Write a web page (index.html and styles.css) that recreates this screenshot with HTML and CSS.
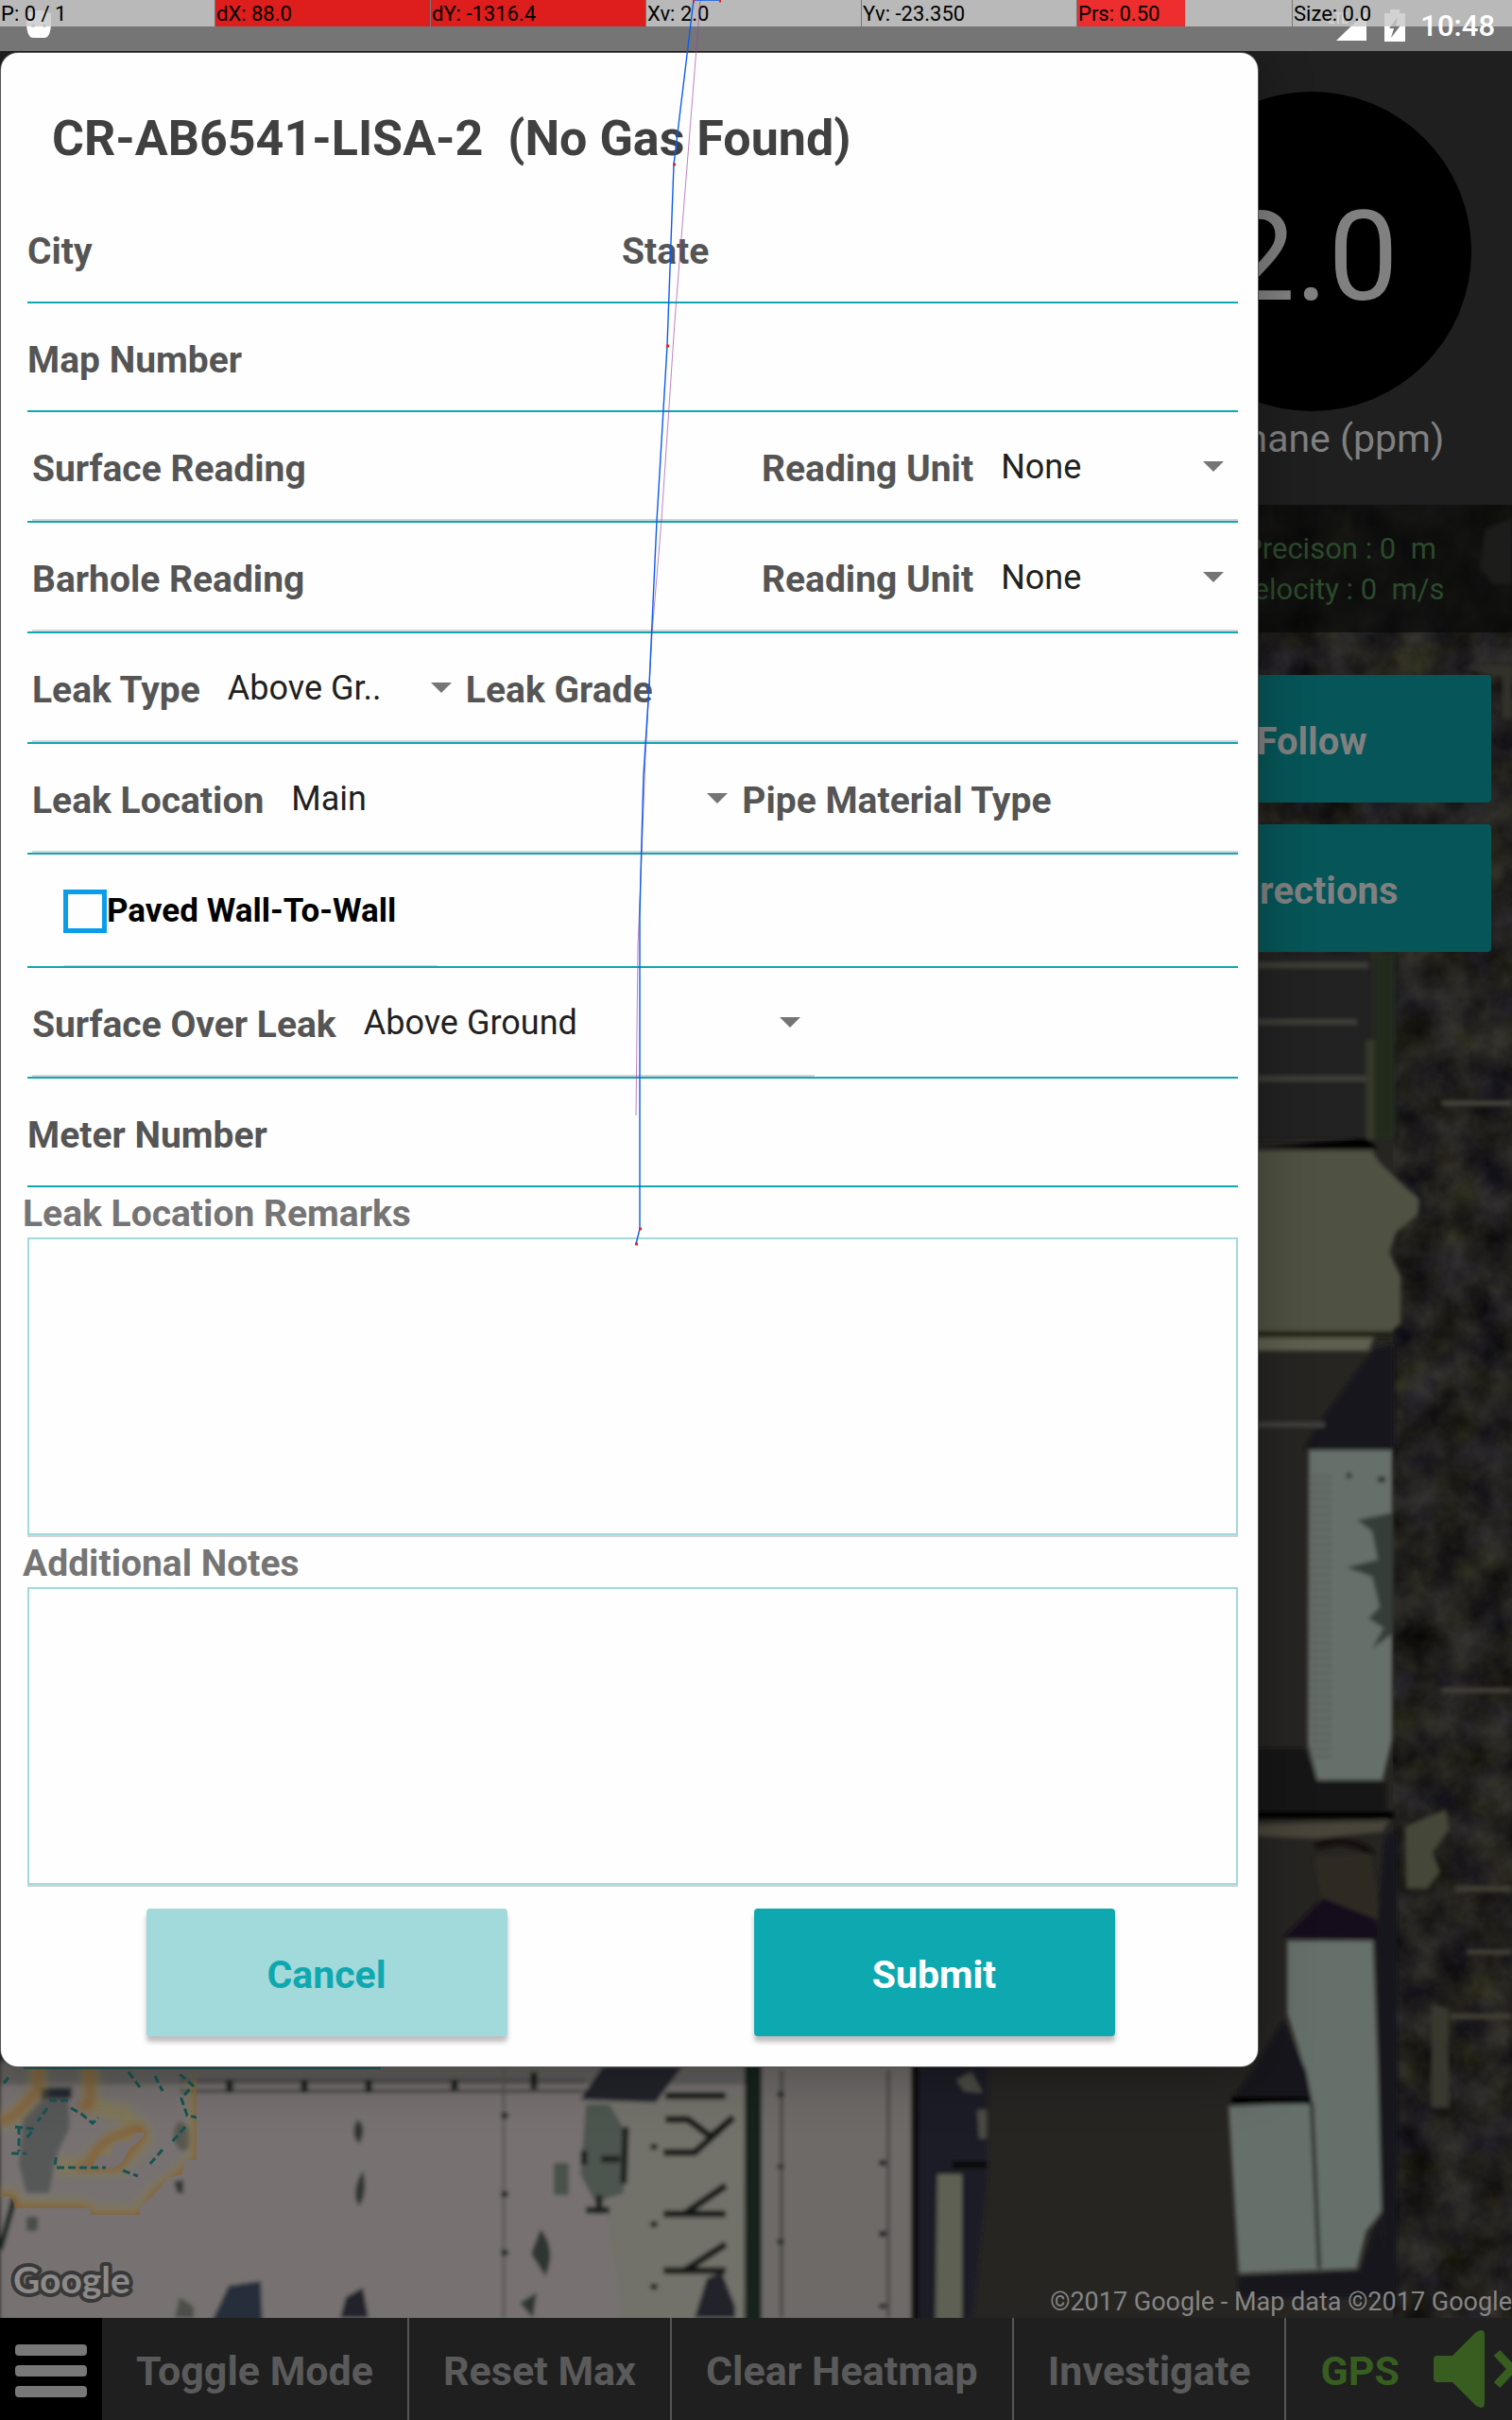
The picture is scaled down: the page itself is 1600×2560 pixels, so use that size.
FILE: index.html
```html
<!DOCTYPE html>
<html lang="en">
<head>
<meta charset="utf-8">
<meta name="viewport" content="width=device-width, initial-scale=1">
<title>Leak report</title>
<link rel="stylesheet" href="styles.css">
</head>
<body>
<header class="status-bar">
  <svg class="robot" viewBox="0 0 26 32" aria-hidden="true"><path d="M0 6Q13 0 26 6V18Q25 32 19 32H7Q1 32 0 18Z" fill="#fff"/><circle cx="7" cy="19" r="2" fill="#bbb"/><circle cx="19" cy="19" r="2" fill="#bbb"/></svg>
  <div class="status-icons">
    <svg class="signal" viewBox="0 0 40 36" aria-hidden="true"><path d="M40 3V34H8Z" fill="#fff"/><path d="M1 4V15H6M7 5H13M10 5V16M20 5H15V15H20M15 10H19" fill="none" stroke="#fff" stroke-width="2"/></svg>
    <svg class="battery" viewBox="0 0 22 34" aria-hidden="true"><path d="M6 0H16V4H22V34H0V4H6Z" fill="#fff"/><path d="M14 8L5 20H10L7 30L17 17H12Z" fill="#757575"/></svg>
    <time>10:48</time>
  </div>
</header>
<div class="pointer-bar">
  <span>P: 0 / 1</span><span class="hot">dX: 88.0</span><span class="hot">dY: -1316.4</span><span>Xv: 2.0</span><span>Yv: -23.350</span><span class="half">Prs: 0.50</span><span>Size: 0.0</span>
</div>

<main class="stage">
  <svg class="map" viewBox="0 54 1600 2398" preserveAspectRatio="xMidYMin slice" aria-hidden="true">
    <defs>
      <filter id="soft" x="-5%" y="-5%" width="110%" height="110%"><feGaussianBlur stdDeviation="2"/></filter>
      <filter id="glow" x="-20%" y="-20%" width="140%" height="140%"><feGaussianBlur stdDeviation="4"/></filter>
      <filter id="leaves" x="0" y="0" width="100%" height="100%" color-interpolation-filters="sRGB"><feTurbulence type="fractalNoise" baseFrequency=".025" numOctaves="4" seed="8"/><feColorMatrix values=".2 .08 0 0 -.01  .2 .09 0 0 -.02  .18 0 .07 0 -.01  0 0 0 0 1"/></filter>
      <clipPath id="heat"><path d="M0 2180H180V2194H208V2285H196L193 2300L178 2304L160 2325L148 2334V2343H96V2336H16L12 2324H0Z"/></clipPath>
    </defs>
    <rect y="54" width="1600" height="2398" fill="#272522"/>
    <rect x="1320" y="534" width="280" height="480" filter="url(#leaves)"/>
    <rect x="1474" y="1000" width="126" height="1452" filter="url(#leaves)"/>
    <g filter="url(#soft)">
      <path d="M1600 548L1572 560L1566 600L1580 618H1600Z" fill="#4b4b49"/>
      <path d="M1545 705H1600V760H1590V715Z" fill="#33332a"/>
      <path d="M1320 1008H1450V1205H1320Z" fill="#222221"/>
      <path d="M1320 1021H1448M1320 1081H1436M1320 1141H1448" stroke="#3e3e37" stroke-width="6"/>
      <path d="M1454 1008H1476V1205H1454Z" fill="#202a1c"/>
      <path d="M1450 1100V1205" stroke="#36392c" stroke-width="9"/>
      <path d="M1525 1167H1600" stroke="#42423a" stroke-width="6"/>
      <path d="M1330 1215L1445 1204L1458 1215Z" fill="#050505"/>
      <path d="M1320 1217H1452L1460 1230L1490 1258L1502 1268L1500 1285L1478 1303L1470 1325L1482 1350V1400L1470 1410H1320Z" fill="#505143"/>
      <path d="M1320 1411H1475" stroke="#202015" stroke-width="6"/>
      <path d="M1320 1415H1454L1448 1429H1320Z" fill="#5e5e50"/>
      <path d="M1454 1427L1400 1500L1380 1533H1475V1422Z" fill="#16151a"/>
      <path d="M1320 1507H1402" stroke="#444440" stroke-width="5"/>
      <path d="M1385 1534H1473V1840L1463 1883H1394L1384 1845Z" fill="#66706a"/>
      <path d="M1398 1560V1860" stroke="#5b665f" stroke-width="22" stroke-dasharray="4 4"/>
      <path d="M1474 1600L1436 1608L1452 1620L1458 1650L1425 1658L1452 1668L1460 1700L1448 1712L1464 1722L1452 1744L1474 1728Z" fill="#343e37"/>
      <path d="M1425 1561h5M1458 1565h8" stroke="#28302b" stroke-width="6"/>
      <path d="M1320 1850H1382L1394 1885H1466V1918H1320Z" fill="#181319"/>
      <path d="M1320 1920H1475" stroke="#060404" stroke-width="7"/>
      <path d="M1320 1930L1470 1926L1463 1938L1390 1945L1320 1942Z" fill="#49453a"/>
      <path d="M1392 1953Q1430 1940 1452 1962" stroke="#150d0a" stroke-width="8" fill="none"/>
      <path d="M1390 1965L1450 1960L1460 2030L1400 2010Z" fill="#2e2a24"/>
      <path d="M1487 1932L1530 1914L1534 1935L1516 1960L1524 1980L1510 1998H1488Z" fill="#444639"/>
      <path d="M1358 2050L1400 2008L1455 2030L1462 2052Z" fill="#13101a"/>
      <path d="M1456 2053L1466 2440H1478V1940H1466Z" fill="#17131a"/>
      <path d="M1515 2120L1532 2125L1534 2230H1514Z" fill="#37372d"/>
      <path d="M1552 2065H1600M1535 2133H1600M1525 1788H1600M1540 1998H1600" stroke="#3f3d36" stroke-width="6"/>
      <path d="M1362 2053H1453L1458 2187L1462 2340L1446 2360L1436 2400L1311 2405L1300 2228L1388 2224L1380 2187L1362 2130Z" fill="#66706a"/>
      <path d="M1388 2224L1396 2400" stroke="#252e2a" stroke-width="4"/>
      <path d="M1328 2187L1358 2138L1382 2190L1388 2221L1303 2223Z" fill="#17121e"/>
      <path d="M1303 2222H1388" stroke="#040405" stroke-width="7"/>
      <path d="M1310 2408L1440 2402L1460 2340L1470 2430H1312Z" fill="#15121b"/>
    </g>
    <g filter="url(#soft)">
      <path d="M0 2180H788V2460H0Z" fill="#777271"/>
      <path d="M0 2180H788V2205H0Z" fill="#615e5b"/>
      <path d="M620 2215H788V2460H660Z" fill="#72726b"/>
      <path d="M190 2201H620M190 2212H640" stroke="#4d4c49" stroke-width="4"/>
      <path d="M788 2180H806V2460H790Z" fill="#15211f"/>
      <path d="M806 2180H964V2460H806Z" fill="#6e6b68"/>
      <path d="M827 2190V2452M940 2190V2452" stroke="#4c4b48" stroke-width="4"/>
      <path d="M964 2180H972V2460H964Z" fill="#080c0d"/>
      <path d="M972 2180H1045V2300L1028 2460H972Z" fill="#1f1d27"/>
      <path d="M992 2300H1018V2460H990Z" fill="#5d6052"/>
      <path d="M1012 2200L1028 2192L1040 2214L1020 2212ZM1034 2232H1044V2262H1036Z" fill="#4c4b45"/>
      <path d="M1008 2290H1044" stroke="#0d0c10" stroke-width="9"/>
      <path d="M638 2186H722L694 2224L614 2221Z" fill="#20202b"/>
      <path d="M620 2226L645 2226L665 2260L660 2320L630 2330L614 2300Z" fill="#4e544f"/>
      <path d="M618 2275V2290M636 2284H656M662 2250L660 2310M620 2338H645M634 2322V2342" stroke="#1b201e" stroke-width="7"/>
      <path d="M586 2288H602V2322H586Z" fill="#4a514a"/>
      <path d="M533 2187V2452" stroke="#56554f" stroke-width="3"/>
      <path d="M704 2217H768M704 2242H728L752 2260L776 2240M702 2277H735L776 2240M702 2342H768M724 2342L768 2312M702 2402H768M724 2402L768 2374" stroke="#141613" stroke-width="7" fill="none"/>
      <path d="M378 2242Q390 2250 380 2268Q370 2258 378 2242M384 2296Q390 2320 380 2334Q370 2320 384 2296M572 2358Q590 2380 577 2408L562 2384ZM572 2245V2262M550 2436L568 2425L564 2452Z" fill="#2f3531"/>
      <path d="M242 2418L276 2413L278 2460H222Z" fill="#272f3a"/>
      <path d="M735 2452L748 2410L764 2404L778 2440V2452ZM360 2452L366 2430L384 2420L390 2452Z" fill="#21212a"/>
      <path d="M185 2452L190 2430L205 2440V2452Z" fill="#4c4f46"/>
      <path d="M184 2308L194 2306V2320H188Z" fill="#333"/>
      <path d="M0 2380L14 2330V2325" stroke="#11201e" stroke-width="6" fill="none"/>
      <path d="M28 2345H40V2360H28Z" fill="#4c4b46"/>
      <path d="M46 2218H72L74 2250L60 2280L52 2320H28L20 2290L24 2240Z" fill="#565859"/>
      <path d="M188 2245Q202 2245 202 2262T190 2274Q178 2262 188 2245" fill="#56574f"/>
      <path d="M42 2214H76" stroke="#272c33" stroke-width="12"/>
      <path d="M243 2200v14M322 2200v14M390 2200v14M481 2200v12M565 2192v18M534 2235v6M534 2318v6M534 2380v6M692 2268v6M692 2350v6M692 2416v6M934 2285v6M934 2360v6M934 2437v5M826 2213v5M826 2290v4M826 2369v5" stroke="#191a18" stroke-width="7"/>
    </g>
    <g fill="none" clip-path="url(#heat)">
      <g filter="url(#glow)">
        <path d="M40 2180V2212L15 2238L0 2245M95 2180V2228L130 2235L145 2255M208 2200V2285L165 2320L145 2343H96L90 2335H16L12 2324H0M94 2286L120 2262L148 2252L152 2262L125 2292H60" stroke="#857b4a" stroke-width="18" stroke-opacity=".6"/>
        <path d="M40 2180V2212L15 2238L0 2245M95 2180V2228H82M210 2200V2285L165 2320L148 2345H96L90 2337H16L12 2324H0M94 2286L110 2266L146 2250L152 2258L125 2292H80" stroke="#86501f" stroke-width="5"/>
      </g>
      <path d="M78 2291H98L106 2280H118L122 2266H136L144 2256H154L148 2264L136 2274L130 2288L118 2294Z" fill="#787070"/>
      <path d="M136 2192L148 2208M164 2196L172 2212M190 2194L204 2206L192 2220L198 2238L208 2240M52 2222H74M75 2230L86 2236L98 2246L104 2240M50 2230L40 2244M16 2250L36 2252L28 2262M20 2250V2276M12 2278H28M58 2290L60 2278M60 2293H112M196 2250L180 2268M172 2274L158 2290M130 2296L146 2302M4 2204L10 2196" stroke="#185352" stroke-width="3" stroke-dasharray="8 4"/>
    </g>
    <path d="M25 2187H403" stroke="#0b5054" stroke-width="3"/>
  </svg>

  <div class="hud">
    <section class="gauge-panel">
      <div class="hud-column">
        <div class="gauge">2.0</div>
        <p class="gauge-label">Methane (ppm)</p>
      </div>
    </section>
    <section class="stats">
      <div class="hud-column"><p>Precison : 0 &nbsp;m</p><p>Velocity : 0 &nbsp;m/s</p></div>
    </section>
    <div class="hud-column hud-actions">
      <button type="button">Follow</button>
      <button type="button">Directions</button>
    </div>
  </div>

  <svg class="google" viewBox="0 0 160 64" role="img" aria-label="Google"><text x="6" y="38">Google</text></svg>
  <p class="attribution">©2017 Google - Map data ©2017 Google</p>

  <form class="dialog">
    <h1>CR-AB6541-LISA-2 &nbsp;(No Gas Found)</h1>
    <div class="row city-row">
      <div class="field"><label for="city">City</label><input id="city"></div>
      <div class="field"><label for="state">State</label><input id="state"></div>
    </div>
    <div class="row"><label for="map-number">Map Number</label><input id="map-number"></div>
    <div class="row spinner-row"><div class="row-inner">
      <div class="field reading"><label for="surface">Surface Reading</label><input id="surface"></div>
      <label for="surface-unit">Reading Unit</label>
      <span class="spinner fill"><select id="surface-unit"><option>None</option></select></span>
    </div></div>
    <div class="row spinner-row"><div class="row-inner">
      <div class="field reading"><label for="barhole">Barhole Reading</label><input id="barhole"></div>
      <label for="barhole-unit">Reading Unit</label>
      <span class="spinner fill"><select id="barhole-unit"><option>None</option></select></span>
    </div></div>
    <div class="row spinner-row"><div class="row-inner">
      <label for="leak-type">Leak Type</label>
      <span class="spinner short"><select id="leak-type"><option>Above Gr..</option></select></span>
      <label for="leak-grade">Leak Grade</label><input id="leak-grade">
    </div></div>
    <div class="row spinner-row"><div class="row-inner">
      <label for="leak-location">Leak Location</label>
      <span class="spinner long"><select id="leak-location"><option>Main</option></select></span>
      <label for="pipe">Pipe Material Type</label><input id="pipe">
    </div></div>
    <div class="row check-row"><div class="row-inner">
      <input type="checkbox" id="paved"><label for="paved">Paved Wall-To-Wall</label>
    </div></div>
    <div class="row spinner-row"><div class="row-inner partial">
      <label for="over-leak">Surface Over Leak</label>
      <span class="spinner fill"><select id="over-leak"><option>Above Ground</option></select></span>
    </div></div>
    <div class="row"><label for="meter">Meter Number</label><input id="meter"></div>
    <label class="area-label" for="remarks">Leak Location Remarks</label>
    <textarea id="remarks"></textarea>
    <label class="area-label" for="notes">Additional Notes</label>
    <textarea id="notes"></textarea>
    <div class="actions">
      <button type="button" class="cancel">Cancel</button>
      <button type="submit" class="submit">Submit</button>
    </div>
  </form>
</main>

<nav class="toolbar">
  <button type="button" class="menu" aria-label="Menu"><i></i><i></i><i></i></button>
  <button type="button">Toggle Mode</button>
  <button type="button">Reset Max</button>
  <button type="button">Clear Heatmap</button>
  <button type="button">Investigate</button>
  <button type="button" class="gps">GPS</button>
  <button type="button" class="sound" aria-label="Sound off">
    <svg viewBox="0 0 110 82" aria-hidden="true"><path d="M4 27H20L45 2Q54 -3 54 5V77Q54 85 45 80L20 55H4Q0 55 0 51V31Q0 27 4 27Z" fill="#375d20"/><path d="M67 24L99 58M99 24L67 58" stroke="#375d20" stroke-width="9"/></svg>
  </button>
</nav>

<svg class="trace" width="800" height="1330" viewBox="0 0 800 1330" aria-hidden="true">
  <path d="M741 0L714 340L700 550L690 670L683 800L678 930L675 1000L673 1180" fill="none" stroke="#a040a0" stroke-opacity=".65"/>
  <path d="M762 0H734L713 174L706 366L695 551L687 725L681 820L678 925L677 970V1300L673 1316" fill="none" stroke="#0a5cf0" stroke-width="1.4"/>
  <path d="M712 174h3M705 366h3M676 1300h3M672 1316h3M733 1h2M761 1h2" stroke="#f02020" stroke-width="3"/>
</svg>
</body>
</html>
```
FILE: styles.css
```css
* { box-sizing: border-box; }

body {
  margin: 0;
  min-height: 100vh;
  display: flex;
  flex-direction: column;
  position: relative;
  overflow-x: hidden;
  background: #1f1f1f;
  font-family: Roboto, "Liberation Sans", sans-serif;
}

h1, p { margin: 0; }

button, input, select, textarea { font: inherit; }

/* Status bar and the pointer readout that lies over it */
.status-bar {
  height: 54px;
  padding: 0 18px 0 28px;
  display: flex;
  justify-content: space-between;
  align-items: flex-start;
  background: #757575;
  color: #fff;
}
.robot { width: 26px; height: 32px; margin-top: 8px; }
.status-icons { display: flex; align-items: flex-start; }
.signal { width: 40px; height: 36px; margin-top: 9px; }
.battery { width: 22px; height: 34px; margin: 10px 16px 0 19px; }
.status-icons time { font-size: 31px; line-height: 36px; margin-top: 10px; font-weight: 500; position: relative; z-index: 2; }

.pointer-bar {
  position: absolute;
  top: 0;
  left: 0;
  right: 0;
  height: 28px;
  display: grid;
  grid-template-columns: repeat(6, 228fr) 232fr;
  font-size: 22px;
  line-height: 30px;
  color: #000;
  background: rgba(200, 200, 200, .82);
}
.pointer-bar span { height: 28px; padding-left: 1px; border-right: 1px solid #777; white-space: nowrap; }
.pointer-bar span:last-child { border-right: 0; }
.pointer-bar .hot { background: #de1d1d; }
.pointer-bar .half { background: linear-gradient(90deg, #ee2e2e 50%, transparent 50%); }

/* Map, readings and dialog share one grid cell */
.stage {
  flex: 1;
  display: grid;
  position: relative;
  overflow: hidden;
}
.stage > * { grid-area: 1 / 1; }
.map { position: absolute; inset: 0; width: 100%; height: 100%; }
.hud { position: relative; }
.hud-column {
  width: 424px;
  margin-left: auto;
  display: flex;
  flex-direction: column;
  align-items: center;
}
.gauge-panel { padding: 43px 0 46px; background: #1f1f1f; color: #808080; }
.gauge {
  width: 338px;
  height: 338px;
  border-radius: 50%;
  background: #000;
  font-size: 132px;
  line-height: 350px;
  text-align: center;
}
.gauge-label { margin-top: 5px; font-size: 41px; line-height: 48px; }
.stats {
  padding: 25px 0 24px;
  background: rgba(8, 10, 9, .7);
  color: #2b4a2c;
  font-size: 31px;
  line-height: 43px;
}
.stats .hud-column { padding-left: 60px; }
.hud-actions { padding-top: 45px; gap: 23px; }
.hud-actions button {
  width: 380px;
  height: 135px;
  padding: 5px 0 0;
  border: 0;
  border-radius: 4px;
  background: #065558;
  color: #808080;
  font-size: 40px;
  font-weight: 700;
}

.google { position: relative; align-self: end; width: 160px; height: 64px; margin-left: 8px; }
.google text {
  font: 700 39px Lato, sans-serif;
  fill: #8c8a8a;
  stroke: #3a3939;
  stroke-width: 8px;
  stroke-linejoin: round;
  paint-order: stroke;
}
.attribution {
  position: relative;
  align-self: end;
  justify-self: end;
  font-size: 27px;
  line-height: 34px;
  color: #858585;
}

/* Dialog */
.dialog {
  position: relative;
  align-self: start;
  width: calc(100% - 270px);
  margin: 2px 0 0 1px;
  padding: 0 21px 32px 23px;
  border-radius: 18px;
  background: #fefefe;
  box-shadow: 0 0 0 1px #555, 0 8px 60px rgba(0, 0, 0, .3);
  font-size: 39px;
  font-weight: 700;
  color: #555;
}
.dialog h1 {
  padding: 59px 0 27px 31px;
  font-size: 52px;
  line-height: 64px;
  color: #404040;
}
.row {
  min-height: 115px;
  margin-left: 5px;
  padding-top: 6px;
  display: flex;
  align-items: center;
  border-bottom: 2px solid #0ea8b0;
}
.row label { white-space: nowrap; }
.field { display: flex; align-items: center; min-width: 0; }
.row input:not([type]) {
  flex: 1;
  width: 0;
  min-width: 0;
  height: 60px;
  margin-left: 16px;
  padding: 0;
  border: 0;
  background: none;
  color: #212121;
  font-weight: 400;
}
.row input:focus, select:focus, textarea:focus { outline: none; }
.city-row .field { width: 629px; }
.city-row .field + .field { flex: 1; }
.spinner-row { min-height: 117px; align-items: stretch; }
.row-inner {
  flex: 1;
  margin-left: 5px;
  display: flex;
  align-items: center;
  border-bottom: 2px solid #d4d3da;
}
.row-inner.partial { flex: 0 1 828px; }
.reading { width: 772px; }
.spinner { position: relative; display: flex; margin: 0 15px 0 14px; padding-bottom: 3px; }
.spinner.fill { flex: 1; }
.spinner.short { width: 252px; }
.spinner.long { width: 477px; }
.spinner::after {
  content: "";
  position: absolute;
  right: 0;
  top: 20px;
  border: 11px solid transparent;
  border-top-color: #757575;
  border-bottom: 0;
  pointer-events: none;
}
select {
  appearance: none;
  width: 100%;
  height: 52px;
  padding: 0 15px;
  border: 0;
  background: none;
  color: #212121;
  font-size: 36px;
  font-weight: 400;
}
.check-row { min-height: 120px; padding-top: 2px; align-items: stretch; color: #000; font-size: 35px; }
.check-row .row-inner { flex: 0 1 396px; margin-left: 38px; border-bottom-width: 1px; }
.check-row input {
  appearance: none;
  flex: none;
  width: 46px;
  height: 46px;
  margin: 0;
  border: 5px solid #0a9dea;
}
.area-label { display: block; padding-top: 4px; line-height: 49px; color: #757575; }
textarea {
  display: block;
  width: calc(100% - 5px);
  height: 315px;
  margin: 0 0 2px 5px;
  padding: 16px;
  border: 2px solid #a2d9da;
  background: #fefefe;
  box-shadow: 0 2px 0 #d4d3da;
  resize: none;
}
.actions { display: grid; grid-template-columns: 1fr 1fr; justify-items: center; padding-top: 23px; }
.actions button {
  width: 382px;
  height: 135px;
  padding: 4px 0 0;
  border: 0;
  border-radius: 4px;
  box-shadow: 0 6px 5px rgba(0, 0, 0, .25);
  font-size: 41px;
}
.cancel { background: #a2d9da; color: #0ea8b0; }
.submit { background: #0ea8b0; color: #fff; }

/* Bottom toolbar */
.toolbar { height: 108px; display: flex; overflow: hidden; background: #1f1f1f; }
.toolbar button {
  flex: none;
  padding: 4px 36px 0;
  border: 0;
  border-right: 2px solid #555;
  background: none;
  color: #5a5a5a;
  font-size: 43px;
  font-weight: 700;
}
.toolbar .menu {
  width: 108px;
  padding: 4px 16px 0;
  border: 0;
  background: #000;
  display: flex;
  flex-direction: column;
  justify-content: center;
  gap: 10px;
}
.menu i { height: 12px; border-radius: 4px; background: #787878; }
.toolbar .gps { border: 0; color: #375d20; }
.toolbar .sound { padding: 0; border: 0; display: flex; align-items: center; }
.sound svg { width: 110px; height: 82px; }

.trace { position: absolute; top: 0; left: 0; pointer-events: none; }
```
